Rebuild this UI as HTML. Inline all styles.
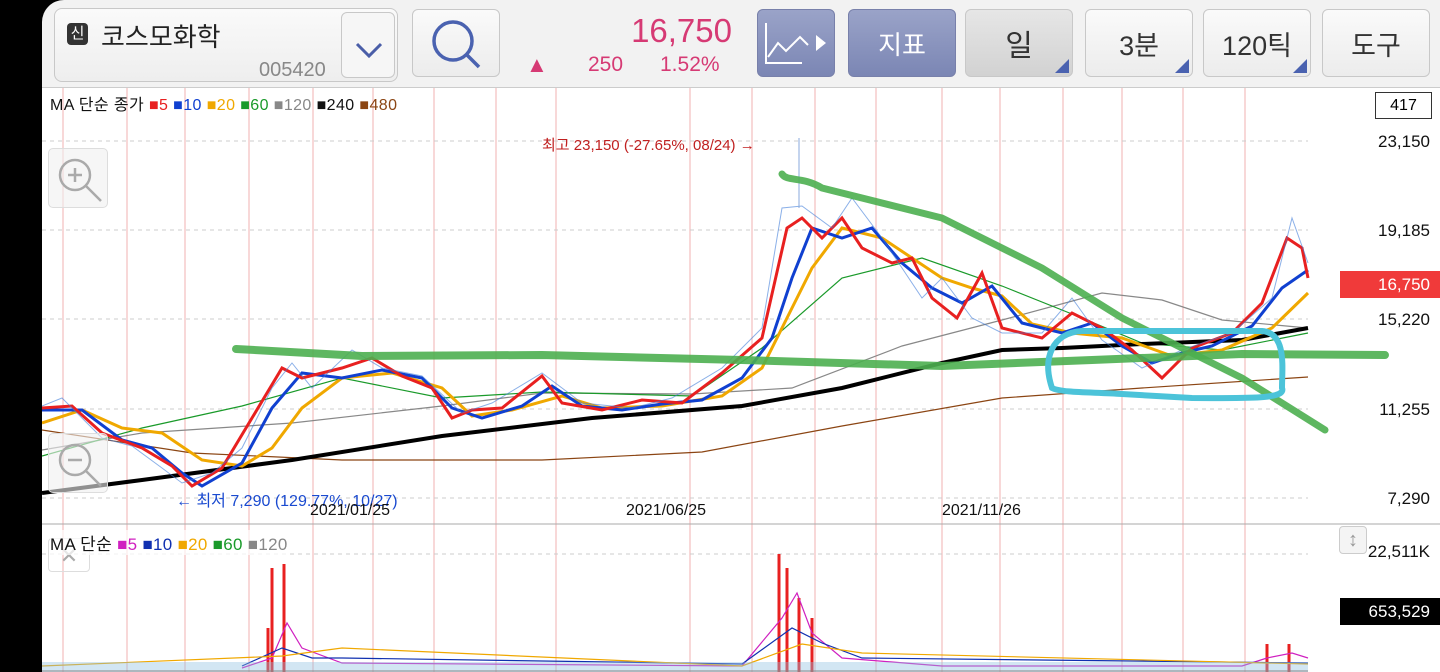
<!DOCTYPE html>
<html><head><meta charset="utf-8"><style>
*{margin:0;padding:0;box-sizing:border-box}
body{width:1440px;height:672px;overflow:hidden;background:#000;font-family:"Liberation Sans","Noto Sans CJK KR",sans-serif;position:relative}
.top{position:absolute;left:42px;top:0;width:1398px;height:88px;background:#f2f2f2;border-top-left-radius:22px;border-bottom:1px solid #ccc}
.btn{position:absolute;top:9px;height:68px;border:1px solid #c8c8c8;border-radius:6px;background:linear-gradient(#fafafa,#ececec);font-size:30px;color:#333;display:flex;align-items:center;justify-content:center}
.tri{position:absolute;right:3px;bottom:3px;width:0;height:0;border-left:14px solid transparent;border-bottom:14px solid #4a62b0}
.main{position:absolute;left:42px;top:88px;width:1398px;height:584px;background:#fff}
.ax{position:absolute;font-size:17px;color:#111;right:10px}
</style></head><body>
<div class="top">
 <div style="position:absolute;left:12px;top:8px;width:344px;height:74px;border:1px solid #c8c8c8;border-radius:8px;background:linear-gradient(#fafafa,#eee)">
  <div style="position:absolute;left:12px;top:14px;width:21px;height:22px;background:#333;border-radius:4px;color:#fff;font-size:15px;text-align:center;line-height:22px">신</div>
  <div style="position:absolute;left:46px;top:8px;font-size:26px;color:#222">코스모화학</div>
  <div style="position:absolute;left:204px;top:50px;font-size:20px;color:#888">005420</div>
  <div style="position:absolute;left:286px;top:3px;width:54px;height:66px;border:1px solid #c8c8c8;border-radius:6px;background:#f6f6f6">
   <svg width="54" height="66"><path d="M15 31 L27 43 L39 31" stroke="#4a5ea8" stroke-width="3" fill="none"/></svg></div>
 </div>
 <div class="btn" style="left:370px;width:88px"><svg width="88" height="68"><circle cx="40" cy="32" r="19" stroke="#4a62b0" stroke-width="3.5" fill="none"/><path d="M54 46 L66 58" stroke="#4a62b0" stroke-width="3.5"/></svg></div>
 <div style="position:absolute;left:580px;top:12px;font-size:33px;color:#d63a74;width:110px;text-align:right">16,750</div>
 <div style="position:absolute;left:484px;top:52px;font-size:22px;color:#d63a74">▲</div>
 <div style="position:absolute;left:546px;top:53px;font-size:21px;color:#d63a74">250</div>
 <div style="position:absolute;left:618px;top:53px;font-size:21px;color:#d63a74">1.52%</div>
 <div class="btn" style="left:715px;width:78px;background:linear-gradient(#9aa3c8,#7b86b4);border-color:#7880aa"><svg width="78" height="68"><path d="M8 14 V54 H44 M10 48 L20 34 L28 42 L42 28 L50 36" stroke="#fff" stroke-width="2" fill="none"/><path d="M58 26 L68 34 L58 42Z" fill="#fff"/></svg></div>
 <div class="btn" style="left:806px;width:108px;background:linear-gradient(#9aa3c8,#7b86b4);border-color:#7880aa;color:#fff;font-size:26px">지표</div>
 <div class="btn" style="left:923px;width:108px;background:linear-gradient(#e6e6e6,#d2d2d2)">일<div class="tri"></div></div>
 <div class="btn" style="left:1043px;width:108px;font-size:27px">3분<div class="tri"></div></div>
 <div class="btn" style="left:1161px;width:108px;font-size:27px">120틱<div class="tri"></div></div>
 <div class="btn" style="left:1280px;width:108px;font-size:27px">도구</div>
</div>
<div class="main">
<svg width="1398" height="584" style="position:absolute;left:0;top:0">
 <g stroke="#f0b0b0" stroke-width="1">
  <line x1="21" y1="0" x2="21" y2="584"/><line x1="85" y1="0" x2="85" y2="584"/><line x1="143" y1="0" x2="143" y2="584"/><line x1="207" y1="0" x2="207" y2="584"/><line x1="271" y1="0" x2="271" y2="584"/><line x1="331" y1="0" x2="331" y2="584"/><line x1="392" y1="0" x2="392" y2="584"/><line x1="454" y1="0" x2="454" y2="584"/><line x1="514" y1="0" x2="514" y2="584"/><line x1="648" y1="0" x2="648" y2="584"/><line x1="710" y1="0" x2="710" y2="584"/><line x1="773" y1="0" x2="773" y2="584"/><line x1="834" y1="0" x2="834" y2="584"/><line x1="900" y1="0" x2="900" y2="584"/><line x1="958" y1="0" x2="958" y2="584"/><line x1="1021" y1="0" x2="1021" y2="584"/><line x1="1080" y1="0" x2="1080" y2="584"/><line x1="1141" y1="0" x2="1141" y2="584"/><line x1="1203" y1="0" x2="1203" y2="584"/>
 </g>
 <g stroke="#ccc" stroke-dasharray="4 4"><line x1="0" y1="53" x2="1266" y2="53"/><line x1="0" y1="142" x2="1266" y2="142"/><line x1="0" y1="231" x2="1266" y2="231"/><line x1="0" y1="321" x2="1266" y2="321"/><line x1="0" y1="410" x2="1266" y2="410"/><line x1="0" y1="466" x2="1266" y2="466"/></g>
 <line x1="0" y1="436" x2="1398" y2="436" stroke="#aaa"/>
 <polyline fill="none" stroke="#8b4513" stroke-width="1.2" points="0,342 150,365 300,372 500,372 660,364 800,338 960,310 1100,300 1266,289"/>
 <polyline fill="none" stroke="#888" stroke-width="1.2" points="0,362 100,345 250,335 400,318 500,305 650,306 750,300 860,258 960,232 1060,205 1120,212 1180,232 1266,240"/>
 <polyline fill="none" stroke="#1a9a2a" stroke-width="1.2" points="0,368 100,340 200,318 300,290 400,310 500,304 650,308 720,260 800,190 880,170 960,198 1040,230 1100,255 1180,262 1266,245"/>
 <polyline fill="none" stroke="#000" stroke-width="4" points="0,405 100,392 250,372 400,348 550,330 700,318 800,300 900,275 960,262 1020,260 1100,256 1200,252 1266,240"/>
 <polyline fill="none" stroke="#f0a800" stroke-width="3" points="0,335 40,322 80,340 120,345 160,372 200,378 230,360 260,320 300,290 350,285 400,300 430,328 470,322 520,308 560,320 620,318 680,308 720,280 745,230 770,180 800,140 840,150 870,170 900,190 930,200 960,208 990,236 1030,245 1080,250 1130,268 1180,262 1230,240 1266,205"/>
 <polyline fill="none" stroke="#1040d0" stroke-width="3" points="0,322 40,322 80,352 110,360 140,385 160,398 200,375 230,320 260,285 300,290 340,282 380,290 410,320 440,330 480,318 510,298 540,318 580,322 620,316 660,312 700,290 730,250 750,190 770,140 800,150 830,140 860,175 890,200 920,215 950,198 980,235 1020,245 1050,235 1080,258 1110,275 1140,265 1170,258 1210,238 1240,200 1266,182"/>
 <polyline fill="none" stroke="#e82020" stroke-width="3" points="0,320 30,318 60,345 100,360 130,378 150,398 180,380 210,330 240,280 260,290 300,280 330,270 360,288 390,300 410,330 430,322 460,320 500,288 520,315 560,322 600,312 640,315 680,285 720,250 745,140 760,130 780,150 800,130 820,160 850,175 870,170 890,210 915,230 940,185 960,240 1000,250 1030,225 1060,240 1090,262 1120,290 1150,260 1190,245 1220,215 1245,150 1260,160 1266,190"/>
 <polyline fill="none" stroke="#3d7bd8" stroke-width="1" opacity=".6" points="0,318 20,310 40,330 60,350 90,358 120,380 140,395 170,385 200,360 230,300 250,275 270,300 310,262 340,280 380,288 420,325 450,315 500,285 540,315 590,320 630,310 680,280 720,240 740,120 760,118 790,140 810,110 840,150 880,210 900,190 930,230 960,245 1000,245 1030,210 1060,252 1100,280 1140,262 1190,245 1230,210 1250,130 1266,175"/>
 <line x1="757" y1="50" x2="757" y2="120" stroke="#88aadd"/>
 <path d="M740 86 C745 94 760 88 780 100 L900 130 L1000 180 L1080 230 L1150 265 L1200 290 L1283 342" fill="none" stroke="#4caf50" stroke-width="7" stroke-linecap="round" opacity=".9"/>
 <path d="M194 261 L320 268 L500 267 L700 272 L900 278 L1050 272 L1200 266 L1343 267" fill="none" stroke="#4caf50" stroke-width="8" stroke-linecap="round" opacity=".9"/>
 <path d="M1010 300 C1000 270 1010 245 1040 243 L1220 243 C1245 245 1240 280 1240 300 C1245 312 1200 310 1150 310 L1080 306 C1050 304 1020 305 1010 300Z" fill="none" stroke="#4cc3d9" stroke-width="6"/>
 <g stroke="#e82020" stroke-width="3"><line x1="230" y1="584" x2="230" y2="480"/><line x1="242" y1="584" x2="242" y2="476"/><line x1="226" y1="584" x2="226" y2="540"/><line x1="737" y1="584" x2="737" y2="466"/><line x1="745" y1="584" x2="745" y2="480"/><line x1="757" y1="584" x2="757" y2="510"/><line x1="770" y1="584" x2="770" y2="530"/><line x1="1225" y1="584" x2="1225" y2="556"/><line x1="1247" y1="584" x2="1247" y2="556"/></g>
 <polyline fill="none" stroke="#d020c0" stroke-width="1.2" points="200,580 230,570 245,535 260,560 300,575 700,578 740,530 755,505 770,545 800,570 900,578 1200,578 1225,570 1250,565 1266,570"/>
 <polyline fill="none" stroke="#1030b0" stroke-width="1.2" points="200,578 240,560 270,570 300,570 700,576 750,540 780,555 820,570 1266,575"/>
 <polyline fill="none" stroke="#f0a800" stroke-width="1.2" points="0,578 240,568 300,560 700,578 760,556 820,565 1266,576"/>
 <rect x="0" y="574" width="1266" height="10" fill="#8ec0e0" opacity=".4"/>
 <line x1="0" y1="583" x2="1266" y2="583" stroke="#888"/>
</svg>
<div style="position:absolute;left:8px;top:3px;font-size:16px;color:#111;letter-spacing:.4px">MA 단순 종가 <span style="color:#e82020">■5</span> <span style="color:#1040d0">■10</span> <span style="color:#f0a800">■20</span> <span style="color:#1a9a2a">■60</span> <span style="color:#888">■120</span> <span>■240</span> <span style="color:#8b4513">■480</span></div>
<div style="position:absolute;left:500px;top:46px;font-size:15px;color:#c02020">최고 23,150 (-27.65%, 08/24) →</div>
<div style="position:absolute;left:134px;top:399px;font-size:16px;color:#1a4ad0">← 최저 7,290 (129.77%, 10/27)</div>
<div style="position:absolute;left:268px;top:414px;font-size:16px;color:#111">2021/01/25</div>
<div style="position:absolute;left:584px;top:414px;font-size:16px;color:#111">2021/06/25</div>
<div style="position:absolute;left:900px;top:414px;font-size:16px;color:#111">2021/11/26</div>
<div style="position:absolute;left:6px;top:60px;width:60px;height:60px;border:1px solid #ddd;border-radius:5px;background:rgba(240,240,240,.6)"><svg width="60" height="60"><circle cx="26" cy="26" r="15" stroke="#aaa" stroke-width="2.5" fill="none"/><path d="M19 26H33M26 19V33M37 37L52 52" stroke="#aaa" stroke-width="2.5"/></svg></div>
<div style="position:absolute;left:6px;top:345px;width:60px;height:60px;border:1px solid #ddd;border-radius:5px;background:rgba(240,240,240,.6)"><svg width="60" height="60"><circle cx="26" cy="26" r="15" stroke="#aaa" stroke-width="2.5" fill="none"/><path d="M19 26H33M37 37L52 52" stroke="#aaa" stroke-width="2.5"/></svg></div>
<div style="position:absolute;left:6px;top:450px;width:42px;height:34px;border:1px solid #ddd;border-radius:4px;color:#aaa;font-size:22px;text-align:center;line-height:34px">✕</div>
<div style="position:absolute;left:8px;top:442px;font-size:17px;color:#111;letter-spacing:.3px;background:rgba(255,255,255,.7)">MA 단순 <span style="color:#d020c0">■5</span> <span style="color:#1030b0">■10</span> <span style="color:#f0a800">■20</span> <span style="color:#1a9a2a">■60</span> <span style="color:#888">■120</span></div>
<div style="position:absolute;left:1333px;top:4px;width:57px;height:27px;border:1px solid #333;font-size:16px;text-align:center;line-height:26px">417</div>
<div class="ax" style="top:44px">23,150</div>
<div class="ax" style="top:133px">19,185</div>
<div style="position:absolute;left:1298px;top:183px;width:100px;height:27px;background:#f03a3a;color:#fff;font-size:17px;text-align:right;padding-right:10px;line-height:27px">16,750</div>
<div class="ax" style="top:222px">15,220</div>
<div class="ax" style="top:312px">11,255</div>
<div class="ax" style="top:401px">7,290</div>
<div style="position:absolute;left:1297px;top:438px;width:28px;height:28px;border:1px solid #ccc;border-radius:4px;background:#f4f4f4;color:#999;font-size:20px;text-align:center;line-height:26px">↕</div>
<div class="ax" style="top:454px">22,511K</div>
<div style="position:absolute;left:1298px;top:510px;width:100px;height:27px;background:#000;color:#fff;font-size:17px;text-align:right;padding-right:10px;line-height:27px">653,529</div>
</div>
</body></html>
